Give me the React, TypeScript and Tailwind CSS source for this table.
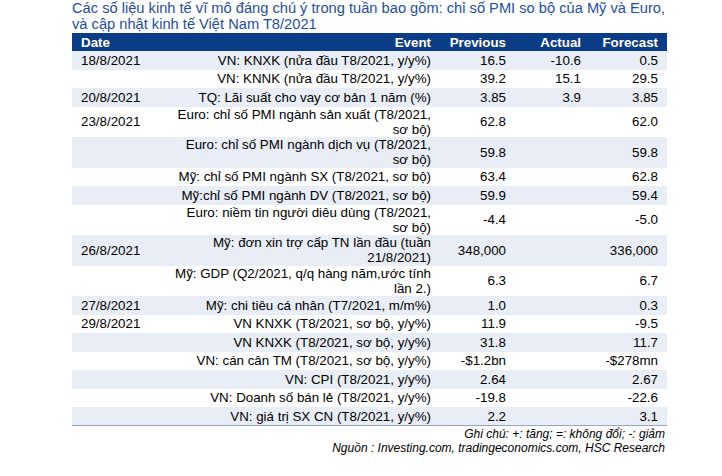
type Row = {
  date?: string;
  event: string[];
  prev: string;
  actual?: string;
  forecast: string;
  shade: boolean;
};

const rows: Row[] = [
  { date: '18/8/2021', event: ['VN: KNXK (nửa đầu T8/2021, y/y%)'], prev: '16.5', actual: '-10.6', forecast: '0.5', shade: true },
  { event: ['VN: KNNK (nửa đầu T8/2021, y/y%)'], prev: '39.2', actual: '15.1', forecast: '29.5', shade: false },
  { date: '20/8/2021', event: ['TQ: Lãi suất cho vay cơ bản 1 năm (%)'], prev: '3.85', actual: '3.9', forecast: '3.85', shade: true },
  { date: '23/8/2021', event: ['Euro: chỉ số PMI ngành sản xuất (T8/2021,', 'sơ bộ)'], prev: '62.8', forecast: '62.0', shade: false },
  { event: ['Euro: chỉ số PMI ngành dịch vụ (T8/2021,', 'sơ bộ)'], prev: '59.8', forecast: '59.8', shade: true },
  { event: ['Mỹ: chỉ số PMI ngành SX (T8/2021, sơ bộ)'], prev: '63.4', forecast: '62.8', shade: false },
  { event: ['Mỹ:chỉ số PMI ngành DV (T8/2021, sơ bộ)'], prev: '59.9', forecast: '59.4', shade: true },
  { event: ['Euro: niềm tin người diêu dùng (T8/2021,', 'sơ bộ)'], prev: '-4.4', forecast: '-5.0', shade: false },
  { date: '26/8/2021', event: ['Mỹ: đơn xin trợ cấp TN lần đầu (tuần', '21/8/2021)'], prev: '348,000', forecast: '336,000', shade: true },
  { event: ['Mỹ: GDP (Q2/2021, q/q hàng năm,ước tính', 'lần 2.)'], prev: '6.3', forecast: '6.7', shade: false },
  { date: '27/8/2021', event: ['Mỹ: chi tiêu cá nhân (T7/2021, m/m%)'], prev: '1.0', forecast: '0.3', shade: true },
  { date: '29/8/2021', event: ['VN KNXK (T8/2021, sơ bộ, y/y%)'], prev: '11.9', forecast: '-9.5', shade: false },
  { event: ['VN KNXK (T8/2021, sơ bộ, y/y%)'], prev: '31.8', forecast: '11.7', shade: true },
  { event: ['VN: cán cân TM (T8/2021, sơ bộ, y/y%)'], prev: '-$1.2bn', forecast: '-$278mn', shade: false },
  { event: ['VN: CPI (T8/2021, y/y%)'], prev: '2.64', forecast: '2.67', shade: true },
  { event: ['VN: Doanh số bán lẻ (T8/2021, y/y%)'], prev: '-19.8', forecast: '-22.6', shade: false },
  { event: ['VN: giá trị SX CN (T8/2021, y/y%)'], prev: '2.2', forecast: '3.1', shade: true },
];

export default function App() {
  return (
    <div className="w-[722px] h-[476px] bg-white font-['Liberation_Sans',Arial,sans-serif]">
      <div className="ml-[72px] w-[595px]">
        <p className="text-[14.67px] leading-[16px] text-[#1f4e9e] pb-px">
          Các số liệu kinh tế vĩ mô đáng chú ý trong tuần bao gồm: chỉ số PMI so bộ của Mỹ và Euro, và cập nhật kinh tế Việt Nam T8/2021
        </p>

        <table className="w-[595px] table-fixed border-collapse text-[13.33px] text-black">
          <colgroup>
            <col className="w-[100px]" />
            <col className="w-[264px]" />
            <col className="w-[75px]" />
            <col className="w-[75px]" />
            <col className="w-[81px]" />
          </colgroup>
          <thead>
            <tr className="h-[18px] bg-[#0b3d86] text-white font-bold leading-[15px]">
              <th className="pl-[9px] text-left font-bold">Date</th>
              <th className="pr-[5px] text-right font-bold">Event</th>
              <th className="pr-[5px] text-right font-bold">Previous</th>
              <th className="pr-[5px] text-right font-bold">Actual</th>
              <th className="pr-[9px] text-right font-bold">Forecast</th>
            </tr>
          </thead>
          <tbody className="border-b border-[#95a5cb]">
            {rows.map((r, i) => (
              <tr
                key={i}
                className={`${r.event.length > 1 ? 'h-[30.5px]' : 'h-[18.5px]'} ${r.shade ? 'bg-[#e9edf5]' : 'bg-white'} leading-[15px]`}
              >
                <td className="pl-[9px] align-middle">{r.date}</td>
                <td className="pr-[5px] text-right align-middle whitespace-nowrap">
                  {r.event.map((line, j) => (
                    <div key={j}>{line}</div>
                  ))}
                </td>
                <td className="pr-[5px] text-right align-middle">{r.prev}</td>
                <td className="pr-[5px] text-right align-middle">{r.actual}</td>
                <td className="pr-[9px] text-right align-middle">{r.forecast}</td>
              </tr>
            ))}
          </tbody>
        </table>

        <div className="pr-[2px] pt-[1px] text-right text-[12px] leading-[14px] italic text-black">
          <p>Ghi chú: +: tăng; =: không đổi; -: giảm</p>
          <p>Nguồn : Investing.com, tradingeconomics.com, HSC Research</p>
        </div>
      </div>
    </div>
  );
}
